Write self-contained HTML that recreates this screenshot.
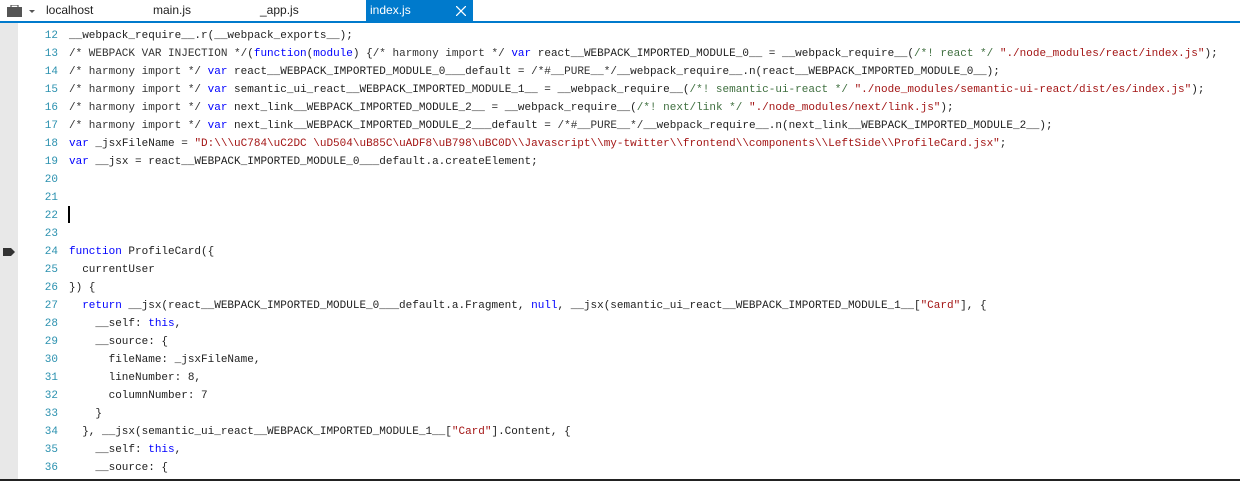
<!DOCTYPE html>
<html><head><meta charset="utf-8"><style>
html,body{margin:0;padding:0;width:1240px;height:481px;overflow:hidden;background:#fff;position:relative;font-family:"Liberation Sans",sans-serif}
.tabs{position:absolute;left:0;top:0;width:1240px;height:21px;background:#fff}
.tab{position:absolute;top:0;height:21px;line-height:21px;font-size:12px;color:#1e1e1e}
.act{left:366px;width:107px;background:#007acc;color:#fff;padding-left:4px;box-sizing:border-box}
.blue{position:absolute;left:0;top:21px;width:1240px;height:2px;background:#007acc}
.gut{position:absolute;left:0;top:23px;width:18px;height:456px;background:#e8e8e8}
.bot{position:absolute;left:0;top:479px;width:1240px;height:2px;background:#222}
.code{position:absolute;left:0;top:27px;font-family:"Liberation Mono",monospace;font-size:11px;line-height:18px;color:#1e1e1e;white-space:pre}
.ln{display:inline-block;width:58px;text-align:right;color:#2b91af;margin-right:11px}
.k{color:#0000ff}.c{color:#333}.g{color:#3f6f3f}.s{color:#a31515}
</style></head><body>
<div class="tabs">
<svg style="position:absolute;left:7px;top:5px" width="28" height="12"><rect x="0" y="2" width="15" height="10" fill="#555"/><rect x="4" y="0" width="7" height="3" fill="none" stroke="#555" stroke-width="1.2"/><path d="M22 5 L28 5 L25 8 Z" fill="#555"/></svg>
<div class="tab" style="left:46px">localhost</div>
<div class="tab" style="left:153px">main.js</div>
<div class="tab" style="left:260px">_app.js</div>
<div class="tab act">index.js<svg style="position:absolute;left:90px;top:6px" width="10" height="10"><path d="M0 0L10 10M10 0L0 10" stroke="#fff" stroke-width="1.3"/></svg></div>
</div>
<div class="blue"></div>
<div class="gut"></div>
<svg style="position:absolute;left:3px;top:248px" width="12" height="8"><path d="M0 0H8L12 4L8 8H0Z" fill="#333"/></svg>
<div style="position:absolute;left:68px;top:206px;width:2px;height:17px;background:#000"></div>
<div class="code"><span class="ln">12</span>__webpack_require__.r(__webpack_exports__);
<span class="ln">13</span><span class="c">/* WEBPACK VAR INJECTION */</span>(<span class="k">function</span>(<span class="k">module</span>) {<span class="c">/* harmony import */</span> <span class="k">var</span> react__WEBPACK_IMPORTED_MODULE_0__ = __webpack_require__(<span class="g">/*! react */</span> <span class="s">"./node_modules/react/index.js"</span>);
<span class="ln">14</span><span class="c">/* harmony import */</span> <span class="k">var</span> react__WEBPACK_IMPORTED_MODULE_0___default = <span class="c">/*#__PURE__*/</span>__webpack_require__.n(react__WEBPACK_IMPORTED_MODULE_0__);
<span class="ln">15</span><span class="c">/* harmony import */</span> <span class="k">var</span> semantic_ui_react__WEBPACK_IMPORTED_MODULE_1__ = __webpack_require__(<span class="g">/*! semantic-ui-react */</span> <span class="s">"./node_modules/semantic-ui-react/dist/es/index.js"</span>);
<span class="ln">16</span><span class="c">/* harmony import */</span> <span class="k">var</span> next_link__WEBPACK_IMPORTED_MODULE_2__ = __webpack_require__(<span class="g">/*! next/link */</span> <span class="s">"./node_modules/next/link.js"</span>);
<span class="ln">17</span><span class="c">/* harmony import */</span> <span class="k">var</span> next_link__WEBPACK_IMPORTED_MODULE_2___default = <span class="c">/*#__PURE__*/</span>__webpack_require__.n(next_link__WEBPACK_IMPORTED_MODULE_2__);
<span class="ln">18</span><span class="k">var</span> _jsxFileName = <span class="s">"D:\\\uC784\uC2DC \uD504\uB85C\uADF8\uB798\uBC0D\\Javascript\\my-twitter\\frontend\\components\\LeftSide\\ProfileCard.jsx"</span>;
<span class="ln">19</span><span class="k">var</span> __jsx = react__WEBPACK_IMPORTED_MODULE_0___default.a.createElement;
<span class="ln">20</span>
<span class="ln">21</span>
<span class="ln">22</span>
<span class="ln">23</span>
<span class="ln">24</span><span class="k">function</span> ProfileCard({
<span class="ln">25</span>  currentUser
<span class="ln">26</span>}) {
<span class="ln">27</span>  <span class="k">return</span> __jsx(react__WEBPACK_IMPORTED_MODULE_0___default.a.Fragment, <span class="k">null</span>, __jsx(semantic_ui_react__WEBPACK_IMPORTED_MODULE_1__[<span class="s">"Card"</span>], {
<span class="ln">28</span>    __self: <span class="k">this</span>,
<span class="ln">29</span>    __source: {
<span class="ln">30</span>      fileName: _jsxFileName,
<span class="ln">31</span>      lineNumber: 8,
<span class="ln">32</span>      columnNumber: 7
<span class="ln">33</span>    }
<span class="ln">34</span>  }, __jsx(semantic_ui_react__WEBPACK_IMPORTED_MODULE_1__[<span class="s">"Card"</span>].Content, {
<span class="ln">35</span>    __self: <span class="k">this</span>,
<span class="ln">36</span>    __source: {</div>
<div class="bot"></div>
</body></html>
